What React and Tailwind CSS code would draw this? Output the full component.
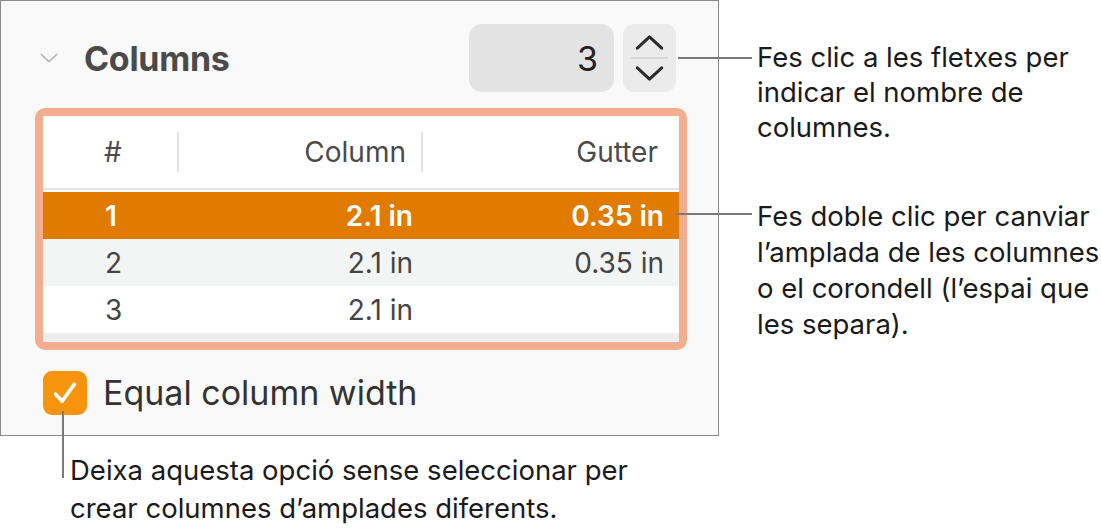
import React from "react";

function Chevron({ dir = "down", className = "", sw = 2.6 }) {
  return (
    <svg viewBox="0 0 30 16" className={className} fill="none">
      {dir === "down" ? (
        <polyline points="2,2 15,14 28,2" stroke="currentColor" strokeWidth={sw} strokeLinecap="round" strokeLinejoin="round" />
      ) : (
        <polyline points="2,14 15,2 28,14" stroke="currentColor" strokeWidth={sw} strokeLinecap="round" strokeLinejoin="round" />
      )}
    </svg>
  );
}

export default function App() {
  const rows = [
    { n: "1", c: "2.1 in", g: "0.35 in", cls: "bg-[#e07b00] text-white font-semibold" },
    { n: "2", c: "2.1 in", g: "0.35 in", cls: "bg-[#f3f4f4] text-[#444]" },
    { n: "3", c: "2.1 in", g: "", cls: "bg-white text-[#444]" },
  ];
  return (
    <div className="relative w-[1101px] h-[529px] bg-white overflow-hidden font-['Inter',sans-serif]">
      {/* Panel */}
      <div className="w-[719px] h-[436px] border border-[#8a8a8a] bg-[#f9f9f9] flex flex-col">
        <div className="mt-[23px] h-[68px] flex items-center pl-[39px] pr-[42px]">
          <Chevron dir="down" className="w-[18px] h-[10px] text-[#b5b5b5]" sw={2.4} />
          <div className="ml-[26px] text-[34px] font-bold text-[#4a4a4a] tracking-[-0.3px]">Columns</div>
          <div className="flex-1" />
          <div className="w-[145px] h-[68px] rounded-[13px] bg-[#e3e3e3] flex items-center justify-end pr-[16px] text-[34px] text-[#222]">3</div>
          <div className="ml-[9px] w-[53px] h-[68px] rounded-[11px] bg-[#ebebeb] flex flex-col items-center justify-center">
            <Chevron dir="up" className="w-[29px] h-[15px] text-[#2a2a2a]" sw={3.2} />
            <div className="w-[37px] h-[2px] bg-[#d8d8d8] my-[7px]" />
            <Chevron dir="down" className="w-[29px] h-[15px] text-[#2a2a2a]" sw={3.2} />
          </div>
        </div>

        {/* Table frame */}
        <div className="mt-[16px] ml-[34px] w-[652px] rounded-[10px] bg-[#f2ae8e] p-[8px]">
          <div className="bg-white text-[28px]">
            <div className="grid grid-cols-[134px_246px_1fr] h-[74px] items-center text-[#4a4a4a] border-b-2 border-[#e4e4e4]">
              <div className="pl-[61px]">#</div>
              <div className="h-[40px] border-l-2 border-r-2 border-[#e2e2e2] flex items-center justify-end pr-[15px]">Column</div>
              <div className="text-right pr-[21px]">Gutter</div>
            </div>
            <div className="h-[2px] bg-white" />
            {rows.map((r) => (
              <div key={r.n} className={`grid grid-cols-[134px_246px_1fr] h-[47px] items-center ${r.cls}`}>
                <div className="pl-[62px]">{r.n}</div>
                <div className="text-right pr-[10px]">{r.c}</div>
                <div className="text-right pr-[15px]">{r.g}</div>
              </div>
            ))}
            <div className="h-[9px] bg-[#ededed]" />
          </div>
        </div>

        {/* Checkbox row */}
        <div className="mt-[17px] ml-[42px] flex items-center">
          <div className="w-[44px] h-[44px] rounded-[9px] bg-[#f7930c] flex items-center justify-center">
            <svg viewBox="0 0 24 24" className="w-[28px] h-[28px]" fill="none">
              <polyline points="4,13 9.5,19 20,4.5" stroke="white" strokeWidth="3.2" strokeLinecap="round" strokeLinejoin="round" />
            </svg>
          </div>
          <div className="ml-[16px] text-[34px] text-[#333]">Equal column width</div>
        </div>
      </div>

      {/* Callout 1 */}
      <div className="absolute left-[678px] top-[57px] w-[74px] h-[2px] bg-[#7a7a7a]" />
      <div className="absolute left-[757px] top-[40px] text-[27.5px] leading-[35px] text-[#1a1a1a]">
        <div>Fes clic a les fletxes per</div>
        <div>indicar el nombre de</div>
        <div>columnes.</div>
      </div>

      {/* Callout 2 */}
      <div className="absolute left-[676px] top-[213px] w-[76px] h-[2px] bg-[#7a7a7a]" />
      <div className="absolute left-[757px] top-[198px] text-[27.5px] leading-[36px] text-[#1a1a1a]">
        <div>Fes doble clic per canviar</div>
        <div>l’amplada de les columnes</div>
        <div>o el corondell (l’espai que</div>
        <div>les separa).</div>
      </div>

      {/* Callout 3 */}
      <div className="absolute left-[62px] top-[411px] w-[2px] h-[67px] bg-[#7a7a7a]" />
      <div className="absolute left-[70px] top-[451px] text-[27.5px] leading-[38px] text-[#1a1a1a]">
        <div>Deixa aquesta opció sense seleccionar per</div>
        <div>crear columnes d’amplades diferents.</div>
      </div>
    </div>
  );
}
